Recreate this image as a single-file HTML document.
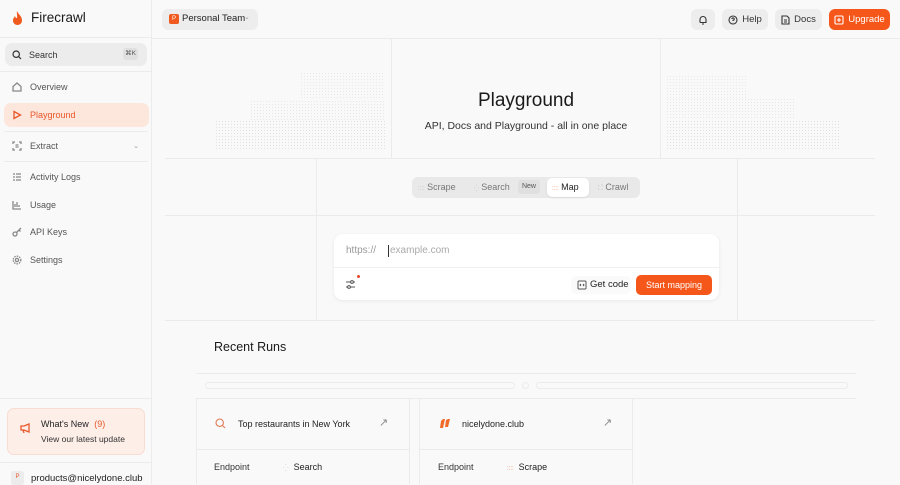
<!DOCTYPE html>
<html><head><meta charset="utf-8"><style>
*{box-sizing:border-box;margin:0;padding:0}
body{width:900px;height:484px;overflow:hidden;background:#f9f9f9;font-family:"Liberation Sans",sans-serif;color:#262626;position:relative;font-size:9px}
.abs{position:absolute}
.side{left:0;top:0;width:152px;height:484px;border-right:1px solid #ececec;background:#f9f9f9}
.nav{position:absolute;left:4px;width:145px;height:24px;border-radius:7px;display:flex;align-items:center;padding-left:8px;color:#555;font-size:9px}
.nav svg{width:10px;height:10px;margin-right:8px;stroke:#888;fill:none;stroke-width:1.3}
.vl{position:absolute;width:1px;background:#ebebeb}
.hlin{position:absolute;height:1px;background:#ebebeb}
.btn{position:absolute;top:9px;height:21px;border-radius:6px;background:#ededed;display:flex;align-items:center;justify-content:center;font-size:9.5px;color:#333;gap:4px}
.dots{position:absolute;background-image:radial-gradient(#d6d6d6 0.55px,transparent 0.65px);background-size:3px 3px}
</style></head><body>
<div class="abs side">
 <div class="abs" style="left:12px;top:11px;width:11px;height:14px"><svg viewBox="0 0 11 14" width="11" height="14"><path d="M5 0C6 3 10 5 10 9.5 10 12 8 14 5.5 14 3 14 1 12 1 9.5 1 7.5 2.5 6 3 5 3.5 7 4.5 7.5 5 7 5.5 5 4.5 2 5 0Z" fill="#f05a1f"/></svg></div>
 <div class="abs" style="left:31px;top:10px;font-size:13.5px;color:#1a1a1a">Firecrawl</div>
 <div class="hlin" style="left:0;top:37px;width:152px"></div>
 <div class="abs" style="left:5px;top:43px;width:142px;height:23px;border-radius:7px;background:#ececec"></div>
 <svg class="abs" style="left:12px;top:50px" width="10" height="10" viewBox="0 0 10 10" fill="none" stroke="#333" stroke-width="1.2"><circle cx="4.2" cy="4.2" r="3.2"/><path d="M6.6 6.6 9 9"/></svg>
 <div class="abs" style="left:29px;top:50px;font-size:9px;color:#333">Search</div>
 <div class="abs" style="left:123px;top:48px;width:15px;height:12px;background:#e0e0e0;border-radius:3px;font-size:6.5px;color:#555;text-align:center;line-height:12px">⌘K</div>
 <div class="hlin" style="left:0;top:71px;width:152px"></div>
 <div class="nav" style="top:75px"><svg viewBox="0 0 10 10"><path d="M1 4.5 5 1l4 3.5V9H1Z"/></svg>Overview</div>
 <div class="nav" style="top:103px;background:#fde6dc;color:#e8572a"><svg viewBox="0 0 10 10" style="stroke:#e8572a"><path d="M2 1.5v7l6.5-3.5Z"/></svg>Playground</div>
 <div class="hlin" style="left:4px;top:131px;width:144px"></div>
 <div class="nav" style="top:134px"><svg viewBox="0 0 10 10"><path d="M1 3V1h2M7 1h2v2M9 7v2H7M3 9H1V7M3.5 4h3M3.5 6h3"/></svg>Extract<span style="position:absolute;right:10px;color:#999;font-size:7px">⌄</span></div>
 <div class="hlin" style="left:4px;top:161px;width:144px"></div>
 <div class="nav" style="top:165px"><svg viewBox="0 0 10 10"><path d="M1 2h2M4 2h5M1 5h2M4 5h5M1 8h2M4 8h5"/></svg>Activity Logs</div>
 <div class="nav" style="top:193px"><svg viewBox="0 0 10 10"><path d="M1 1v8h8M3 7V4M5 7V2M7 7V5"/></svg>Usage</div>
 <div class="nav" style="top:220px"><svg viewBox="0 0 10 10"><circle cx="3" cy="7" r="2"/><path d="M4.5 5.5 9 1M7 3l1.5 1.5"/></svg>API Keys</div>
 <div class="nav" style="top:248px"><svg viewBox="0 0 10 10"><circle cx="5" cy="5" r="1.6"/><circle cx="5" cy="5" r="3.8" stroke-dasharray="1.5 1"/></svg>Settings</div>
 <div class="hlin" style="left:0;top:398px;width:152px"></div>
 <div class="abs" style="left:7px;top:408px;width:138px;height:47px;background:#fdeee8;border:1px solid #f8ddd2;border-radius:7px"></div>
 <svg class="abs" style="left:20px;top:423px" width="11" height="10" viewBox="0 0 11 10" fill="none" stroke="#e8572a" stroke-width="1.3"><path d="M1 3h3l5-2v8L4 7H1ZM3 7l1 3"/></svg>
 <div class="abs" style="left:41px;top:419px;font-size:9px;color:#222">What's New <span style="color:#e8572a;margin-left:3px">(9)</span></div>
 <div class="abs" style="left:41px;top:434px;font-size:8.5px;color:#333">View our latest update</div>
 <div class="hlin" style="left:0;top:462px;width:152px"></div>
 <div class="abs" style="left:11px;top:471px;width:13px;height:14px;background:#ececec;border-radius:3px;color:#e8572a;font-size:6px;text-align:center;line-height:13px">P</div>
 <div class="abs" style="left:31px;top:473px;font-size:9.5px;color:#222">products@nicelydone.club</div>
</div>

<div class="hlin" style="left:152px;top:38px;width:748px"></div>
<div class="abs" style="left:162px;top:9px;width:96px;height:21px;background:#ededed;border-radius:6px"></div>
<div class="abs" style="left:169px;top:14px;width:10px;height:10px;background:#f05a1f;border-radius:2px;color:#fff;font-size:6px;text-align:center;line-height:10px">P</div>
<div class="abs" style="left:182px;top:13px;font-size:9.5px;color:#222">Personal Team</div>
<div class="abs" style="left:244px;top:13px;font-size:7px;color:#999">⌄</div>
<div class="btn" style="left:691px;width:24px"><svg width="10" height="10" viewBox="0 0 10 10" fill="none" stroke="#333" stroke-width="1.1"><path d="M2 7.5V4.5a3 3 0 0 1 6 0v3H2M4 9h2"/></svg></div>
<div class="btn" style="left:722px;width:46px"><svg width="10" height="10" viewBox="0 0 10 10" fill="none" stroke="#333" stroke-width="1.1"><circle cx="5" cy="5" r="4"/><path d="M3.8 4a1.2 1.2 0 1 1 1.2 1.3V6M5 7.3v.2"/></svg>Help</div>
<div class="btn" style="left:775px;width:47px"><svg width="9" height="10" viewBox="0 0 9 10" fill="none" stroke="#333" stroke-width="1.1"><path d="M1 1h5l2 2v6H1ZM3 5h3M3 7h3"/></svg>Docs</div>
<div class="btn" style="left:829px;width:61px;background:#f5571b;color:#fff"><svg width="10" height="10" viewBox="0 0 10 10" fill="none" stroke="#fff" stroke-width="1.1"><rect x="1" y="1" width="8" height="8" rx="1"/><path d="M5 3v4M3 5h4"/></svg>Upgrade</div>

<div class="vl" style="left:391px;top:38px;height:120px"></div>
<div class="vl" style="left:660px;top:38px;height:120px"></div>
<div class="hlin" style="left:165px;top:158px;width:710px"></div>
<div class="hlin" style="left:165px;top:215px;width:710px"></div>
<div class="vl" style="left:316px;top:158px;height:162px"></div>
<div class="vl" style="left:737px;top:158px;height:162px"></div>
<div class="hlin" style="left:165px;top:320px;width:710px"></div>
<div class="dots" style="left:215px;top:120px;width:170px;height:30px;opacity:.7"></div>
<div class="dots" style="left:250px;top:100px;width:135px;height:20px;opacity:.55"></div>
<div class="dots" style="left:300px;top:72px;width:85px;height:28px;opacity:.45"></div>
<div class="dots" style="left:666px;top:120px;width:175px;height:30px;opacity:.7"></div>
<div class="dots" style="left:666px;top:98px;width:130px;height:22px;opacity:.55"></div>
<div class="dots" style="left:666px;top:75px;width:80px;height:23px;opacity:.45"></div>

<div class="abs" style="left:391px;top:90px;width:270px;text-align:center;font-size:19px;color:#1a1a1a">Playground</div>
<div class="abs" style="left:391px;top:120px;width:270px;text-align:center;font-size:10.5px;color:#333">API, Docs and Playground - all in one place</div>

<div class="abs" style="left:412px;top:177px;width:228px;height:21px;background:#e9e9e9;border-radius:6px"></div>
<div class="abs" style="left:418px;top:182px;font-size:9px;color:#777"><span style="color:#bbb;font-size:6px">::::</span> Scrape</div>
<div class="abs" style="left:474px;top:182px;font-size:9px;color:#777"><span style="color:#bbb;font-size:6px">⁛</span> Search</div>
<div class="abs" style="left:518px;top:180px;width:22px;height:14px;background:#e0e0e0;border-radius:3px;font-size:7px;color:#555;text-align:center;line-height:14px">New</div>
<div class="abs" style="left:547px;top:178px;width:42px;height:19px;background:#fff;border-radius:5px;box-shadow:0 1px 2px rgba(0,0,0,.08)"></div>
<div class="abs" style="left:552px;top:182px;font-size:9px;color:#222"><span style="color:#f0845a;font-size:6px">::::</span> Map</div>
<div class="abs" style="left:598px;top:182px;font-size:9px;color:#777"><span style="color:#bbb;font-size:7px">⛶</span> Crawl</div>

<div class="abs" style="left:334px;top:234px;width:385px;height:66px;background:#fff;border-radius:9px;box-shadow:0 1px 4px rgba(0,0,0,.07)"></div>
<div class="hlin" style="left:334px;top:267px;width:385px;background:#f0f0f0"></div>
<div class="abs" style="left:346px;top:245px;font-size:10px;color:#999">https://</div>
<div class="abs" style="left:388px;top:245px;width:1px;height:12px;background:#333"></div>
<div class="abs" style="left:390px;top:245px;font-size:10px;color:#aaa">example.com</div>
<svg class="abs" style="left:345px;top:279px" width="11" height="11" viewBox="0 0 11 11" fill="none" stroke="#555" stroke-width="1"><path d="M1 3h9M1 8h9"/><circle cx="7" cy="3" r="1.4" fill="#fff"/><circle cx="4" cy="8" r="1.4" fill="#fff"/></svg>
<div class="abs" style="left:357px;top:275px;width:3px;height:3px;background:#e8472a;border-radius:50%"></div>
<div class="abs" style="left:571px;top:276px;width:60px;height:18px;border-radius:5px;background:#fafafa"></div>
<svg class="abs" style="left:577px;top:280px" width="10" height="10" viewBox="0 0 10 10" fill="none" stroke="#555" stroke-width="1"><rect x="1" y="1" width="8" height="8" rx="1"/><path d="M4 4 3 5l1 1M6 4l1 1-1 1"/></svg>
<div class="abs" style="left:590px;top:279px;font-size:9.5px;color:#222">Get code</div>
<div class="abs" style="left:636px;top:275px;width:76px;height:20px;background:#f5571b;border-radius:5px;color:#fff;font-size:9px;text-align:center;line-height:20px">Start mapping</div>

<div class="abs" style="left:214px;top:340px;font-size:12.5px;color:#1a1a1a">Recent Runs</div>
<div class="hlin" style="left:196px;top:373px;width:660px"></div>
<div class="abs" style="left:205px;top:382px;width:310px;height:7px;border:1px solid #ececec;border-radius:4px"></div>
<div class="abs" style="left:522px;top:382px;width:7px;height:7px;border:1px solid #ececec;border-radius:50%"></div>
<div class="abs" style="left:536px;top:382px;width:312px;height:7px;border:1px solid #ececec;border-radius:4px"></div>
<div class="hlin" style="left:196px;top:398px;width:660px"></div>
<div class="vl" style="left:196px;top:398px;height:86px"></div>
<div class="vl" style="left:409px;top:398px;height:86px"></div>
<div class="vl" style="left:419px;top:398px;height:86px"></div>
<div class="vl" style="left:632px;top:398px;height:86px"></div>
<div class="hlin" style="left:196px;top:449px;width:213px"></div>
<div class="hlin" style="left:419px;top:449px;width:213px"></div>
<svg class="abs" style="left:215px;top:418px" width="11" height="11" viewBox="0 0 11 11" fill="none" stroke="#e07b55" stroke-width="1.1"><circle cx="4.7" cy="4.7" r="3.7"/><path d="M7.5 7.5 10 10"/></svg>
<div class="abs" style="left:238px;top:419px;font-size:9px;color:#222">Top restaurants in New York</div>
<div class="abs" style="left:379px;top:416px;font-size:11px;color:#888">↗</div>
<svg class="abs" style="left:439px;top:418px" width="12" height="11" viewBox="0 0 12 11"><path d="M2 3 4 1h2L4 10H1Z M7 2l2-1h2L9 9H6Z" fill="#f06a2a"/></svg>
<div class="abs" style="left:462px;top:419px;font-size:9px;color:#222">nicelydone.club</div>
<div class="abs" style="left:603px;top:416px;font-size:11px;color:#888">↗</div>
<div class="abs" style="left:214px;top:462px;font-size:9px;color:#333">Endpoint</div>
<div class="abs" style="left:283px;top:462px;font-size:9px;color:#222"><span style="color:#ccc;font-size:7px">⁛</span>&nbsp; Search</div>
<div class="abs" style="left:438px;top:462px;font-size:9px;color:#333">Endpoint</div>
<div class="abs" style="left:507px;top:462px;font-size:9px;color:#222"><span style="color:#f0845a;font-size:6px">::::</span>&nbsp; Scrape</div>
</body></html>
